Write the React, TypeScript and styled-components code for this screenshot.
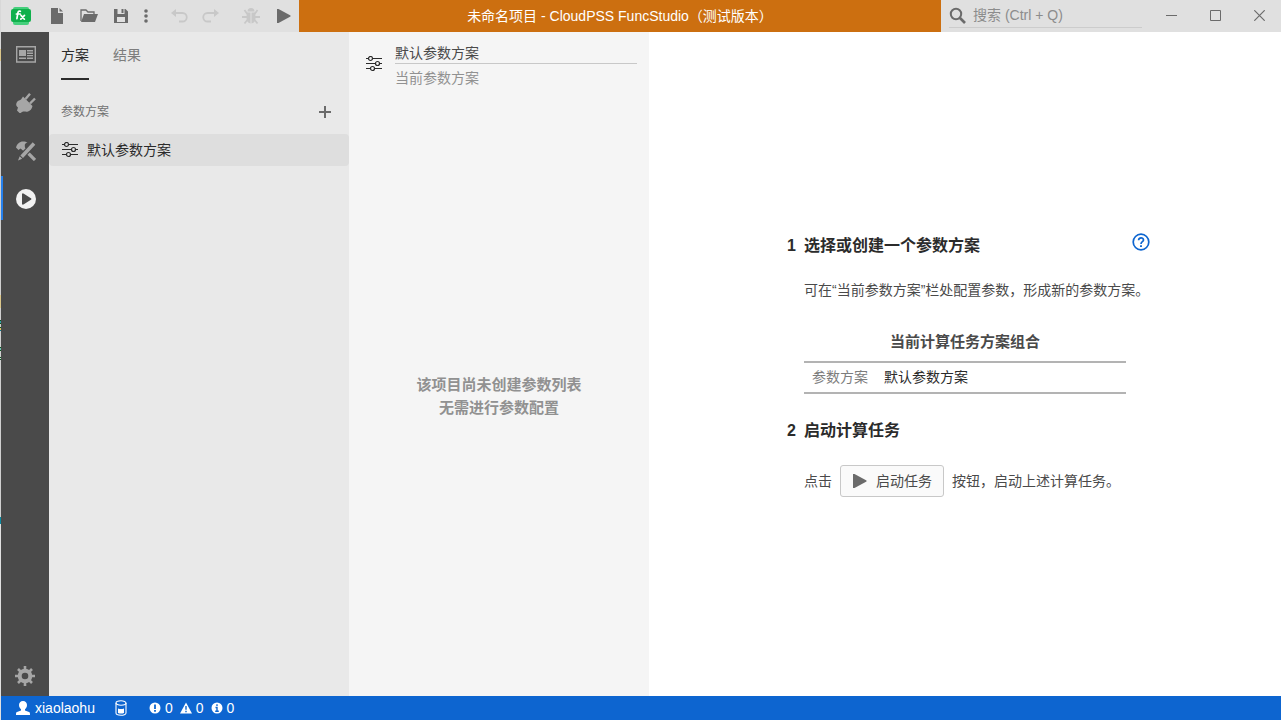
import React from 'react';
import styled, { createGlobalStyle } from 'styled-components';

const GlobalStyle = createGlobalStyle`
  *, *::before, *::after { box-sizing: border-box; }
  body {
    margin: 0;
    font-family: "Liberation Sans", "Noto Sans CJK SC", sans-serif;
    font-size: 14px;
    line-height: 20px;
    color: #2b2b2b;
    background: #fff;
  }
  h2, h3, p, ul { margin: 0; padding: 0; font-weight: normal; }
  button, input { font: inherit; color: inherit; border: 0; background: none; padding: 0; margin: 0; border-radius: 0; }
  svg { display: block; flex: none; }
`;

const Frame = styled.div`
  display: grid;
  grid-template-columns: 1px minmax(0, 1fr);
  min-height: 100vh;
`;

const DesktopEdge = styled.div`
  background: linear-gradient(
    #d8d8d8 49px, #dcc78a 49px 61px, #d0d0d0 61px 295px, #dcc78a 295px 308px,
    #d0d0d0 308px 320px, #0a5a20 320px 321px, #30a0b0 321px 323px, #0a5a20 323px 324px,
    #d0d0d0 324px 327px, #0a5a20 327px 328px, #dcc060 328px 330px, #0a7a90 330px 331px,
    #d0d0d0 331px 347px, #0a5a20 347px 348px, #70c0b0 348px 350px, #0a5a20 350px 351px,
    #d0d0d0 351px 357px, #0a5a20 357px 358px, #d0d0d0 358px 359px, #0a5a20 359px 360px,
    #d0d0d0 360px 517px, #0a8aa0 517px 524px, #e0e0e0 524px
  );
`;

const Window = styled.div`
  display: grid;
  grid-template-rows: 32px minmax(0, 1fr) 24px;
`;

const TitleBar = styled.header`
  display: flex;
  background: #e0e0e0;
  color: #6b6b6b;
`;

const Toolbar = styled.div`
  display: flex;
  align-items: center;
  padding-left: 8px;
`;

const Logo = styled.div`
  display: flex;
  margin-right: 8px;
`;

const ToolButton = styled.button<{ $narrow?: boolean; $gap?: boolean }>`
  display: flex;
  align-items: center;
  justify-content: center;
  width: ${p => (p.$narrow ? 18 : 32)}px;
  height: 32px;
  margin-left: ${p => (p.$gap ? 8 : 0)}px;
  &:disabled { color: #c8c8c8; }
`;

const Title = styled.div`
  flex: 1;
  background: #cc6f10;
  color: #fff;
  line-height: 32px;
  text-align: center;
  white-space: nowrap;
`;

const Search = styled.label`
  display: flex;
  align-items: center;
  gap: 7px;
  width: 193px;
  height: 28px;
  margin: 0 7px 0 8px;
  padding-top: 4px;
  border-bottom: 1px solid #cccccc;
`;

const SearchInput = styled.input`
  flex: 1;
  min-width: 0;
  padding-bottom: 2px;
  outline: 0;
  &::placeholder { color: #8c8c8c; opacity: 1; }
`;

const WindowButton = styled.button`
  display: flex;
  align-items: center;
  justify-content: center;
  width: 44px;
  height: 30px;
`;

const Workspace = styled.div`
  display: grid;
  grid-template-columns: 48px 300px 300px minmax(0, 1fr);
`;

const ActivityBar = styled.nav`
  display: flex;
  flex-direction: column;
  gap: 4px;
  background: #4a4a4a;
`;

const Activity = styled.button<{ $active?: boolean }>`
  display: flex;
  align-items: center;
  justify-content: center;
  height: 44px;
  border-left: 2px solid ${p => (p.$active ? '#2680eb' : 'transparent')};
  color: ${p => (p.$active ? '#f2f2f2' : '#a6a6a6')};
  padding-top: 2px;
`;

const Settings = styled(Activity)`
  height: 40px;
  margin-top: auto;
  padding: 0 2px 0 0;
`;

const SchemePanel = styled.aside`
  background: #e9e9e9;
`;

const Tabs = styled.div`
  display: flex;
  gap: 24px;
  height: 48px;
  padding-left: 12px;
`;

const Tab = styled.button<{ $active?: boolean }>`
  color: ${p => (p.$active ? '#2b2b2b' : '#7d7d7d')};
  border-bottom: 2px solid ${p => (p.$active ? '#2b2b2b' : 'transparent')};
`;

const SectionHead = styled.div`
  display: flex;
  align-items: center;
  justify-content: space-between;
  height: 54px;
  padding: 10px 8px 0 12px;
`;

const SectionTitle = styled.h3`
  font-size: 12px;
  color: #707070;
`;

const AddButton = styled.button`
  display: flex;
  align-items: center;
  justify-content: center;
  width: 32px;
  height: 32px;
  color: #6b6b6b;
`;

const SchemeItem = styled.button`
  display: flex;
  align-items: center;
  gap: 8px;
  width: 100%;
  height: 32px;
  padding: 0 12px;
  border-radius: 4px;
  background: #dedede;
`;

const ParamPanel = styled.section`
  display: flex;
  flex-direction: column;
  background: #f5f5f5;
`;

const ParamHead = styled.div`
  display: flex;
  align-items: center;
  gap: 12px;
  height: 64px;
  padding: 0 12px 0 16px;
`;

const ParamFields = styled.div`
  flex: 1;
  display: flex;
  flex-direction: column;
  gap: 4px;
  padding-top: 2px;
`;

const NameInput = styled.input`
  width: 100%;
  height: 22px;
  padding-bottom: 2px;
  color: #4a4a4a;
  border-bottom: 1px solid #c8c8c8;
  outline: 0;
`;

const NameLabel = styled.label`
  color: #919191;
`;

const Empty = styled.p`
  flex: 1;
  display: flex;
  flex-direction: column;
  justify-content: center;
  text-align: center;
  font-size: 15px;
  line-height: 23px;
  font-weight: bold;
  color: #919191;
`;

const Main = styled.main`
  display: flex;
  align-items: center;
  justify-content: center;
  background: #fff;
`;

const Guide = styled.div`
  width: 370px;
`;

const StepHead = styled.div`
  display: flex;
  justify-content: space-between;
`;

const StepTitle = styled.h2`
  display: flex;
  gap: 8px;
  font-size: 16px;
  line-height: 30px;
  font-weight: bold;
`;

const StepNumber = styled.span`
  width: 16px;
  text-align: right;
`;

const HelpButton = styled.button`
  display: flex;
  height: 20px;
  padding-top: 2px;
  color: #0d65d0;
`;

const StepBody = styled.div`
  margin: 19px 0 22px 24px;
  color: #4a4a4a;
  white-space: nowrap;
  &:last-child { margin-bottom: 0; }
`;

const Combo = styled.table`
  width: 322px;
  margin-top: 32px;
  border-collapse: separate;
  border-spacing: 0;
  text-align: left;
`;

const ComboCaption = styled.caption`
  padding-bottom: 9px;
  font-size: 15px;
  font-weight: bold;
`;

const ComboName = styled.th`
  width: 72px;
  height: 33px;
  padding: 0 0 2px 8px;
  font-weight: normal;
  color: #7d7d7d;
  border: solid #b3b3b3;
  border-width: 2px 0;
`;

const ComboValue = styled.td`
  padding: 0 8px 2px;
  color: #2b2b2b;
  border: solid #b3b3b3;
  border-width: 2px 0;
`;

const StartRow = styled.div`
  display: flex;
  align-items: center;
  gap: 8px;
`;

const StartButton = styled.button`
  display: flex;
  align-items: center;
  gap: 9px;
  height: 32px;
  padding: 0 11px;
  border: 1px solid #c8c8c8;
  border-radius: 3px;
  background: #fafafa;
  svg { color: #6b6b6b; }
`;

const StatusBar = styled.footer`
  display: flex;
  align-items: center;
  background: #0d65d0;
  color: #fff;
  padding-left: 14px;
`;

const StatusItem = styled.button<{ $space?: number }>`
  display: flex;
  align-items: center;
  gap: 4px;
  height: 24px;
  margin-right: ${p => p.$space ?? 7}px;
`;

const LogoIcon = () => (
  <svg width="24" height="20" viewBox="0 0 24 20">
    <rect x="4" y="1" width="16" height="18" rx="2" fill="#45cf7c" />
    <rect x="2" y="3" width="20" height="13" rx="2" fill="#10b04c" />
    <g stroke="#fff" fill="none" strokeWidth="1.7" strokeLinecap="round">
      <path d="M11.4 5.3c-1.700-.700-2.300.400-2.600 2L7.900 12.700M7.400 8h3.800M12 9.400l3.400 3.800M15.500 9.400l-3.700 3.800" />
    </g>
  </svg>
);
const FileIcon = () => (
  <svg width="18" height="18" viewBox="0 0 18 18" fill="currentColor"><path d="M3 1h7v5h5v11H3zM11.500 1L15 4.500h-3.500z" /></svg>
);
const FolderIcon = () => (
  <svg width="18" height="16" viewBox="0 0 18 16"><path d="M1 13V2h5l2 2h6v3" fill="none" stroke="currentColor" strokeWidth="1.300" /><path d="M4 6h14l-3 8H1z" fill="currentColor" /></svg>
);
const SaveIcon = () => (
  <svg width="16" height="16" viewBox="0 0 16 16"><path fill="currentColor" fillRule="evenodd" d="M1 1h11.500L15 3.500V15H1zM4.500 1v5h7V1zM4 9v5h8V9z" /><path fill="currentColor" d="M8.500 1h2v4h-2z" /></svg>
);
const MoreIcon = () => (
  <svg width="4" height="14" viewBox="0 0 4 14" fill="currentColor"><circle cx="2" cy="2" r="1.800" /><circle cx="2" cy="7" r="1.800" /><circle cx="2" cy="12" r="1.800" /></svg>
);
const UndoIcon = ({ flip }: { flip?: boolean }) => (
  <svg width="18" height="16" viewBox="0 0 18 16"><g transform={flip ? 'matrix(-1 0 0 1 18 0)' : undefined}><path d="M3 5h9.500a4 4 0 0 1 0 8.500H9" fill="none" stroke="currentColor" strokeWidth="1.800" /><path d="M6 1v8L1 5z" fill="currentColor" /></g></svg>
);
const BugIcon = () => (
  <svg width="18" height="18" viewBox="0 0 18 18"><path fill="currentColor" d="M5.500 4.500a3.500 3.500 0 0 1 7 0zM4.800 5.500h3.700v11C5.500 16 4.500 13.500 4.500 11zM9.500 5.500h3.700l.3 5.500c0 2.500-1 5-4 5.500z" /><path d="M2.500 3l2.800 4M15.500 3l-2.800 4M0 10h5M13 10h5M2.500 16.500l2.800-3.500M15.500 16.500l-2.800-3.500" fill="none" stroke="currentColor" strokeWidth="1.800" /></svg>
);
const PlayIcon = () => (
  <svg width="15" height="16" viewBox="0 0 15 16" fill="currentColor"><path d="M1 1h1.500L14.500 7.500v1L2.500 15H1z" /></svg>
);
const SearchIcon = () => (
  <svg width="17" height="17" viewBox="0 0 17 17" fill="none" stroke="currentColor"><circle cx="7" cy="7" r="5.200" strokeWidth="2" /><path d="M11 11l5 5" strokeWidth="2.600" /></svg>
);
const MinimizeIcon = () => (
  <svg width="11" height="11" viewBox="0 0 11 11" stroke="currentColor"><path d="M0 5.500h11" /></svg>
);
const MaximizeIcon = () => (
  <svg width="11" height="11" viewBox="0 0 11 11" stroke="currentColor" fill="none"><path d="M.5.5h10v10H.5z" /></svg>
);
const CloseIcon = () => (
  <svg width="11" height="11" viewBox="0 0 11 11" stroke="currentColor"><path d="M.3.3l10.400 10.400M10.700.3L.3 10.700" strokeWidth="1.200" /></svg>
);
const NewsIcon = () => (
  <svg width="20" height="18" viewBox="0 0 20 18"><path d="M.7.7h18.600v15.300H.7z" fill="none" stroke="currentColor" strokeWidth="1.400" /><path fill="currentColor" d="M3 4h7v6H3zM11 4h6v1.500h-6zM11 6.500h6V8h-6zM11 9h6v1.300h-6zM3 11.500h7V13H3zM11 11.500h6V13h-6z" /></svg>
);
const PlugIcon = () => (
  <svg width="20" height="20" viewBox="0 0 20 20"><path fill="currentColor" d="M7 3.500l9.500 9.500c-.500 3-2.500 5-4.500 5.500-2 .500-4-.300-6 .500L4 20.500 1 17.500l1-3C-.5 13 0 10.500 1 9c1-1.500 3-1.500 4-2.500z" /><path d="M9.500 6L14 .8M14 10.500l5-5" stroke="currentColor" strokeWidth="2.400" /></svg>
);
const ToolsIcon = () => (
  <svg width="20" height="20" viewBox="0 0 20 20">
    <path d="M7 7l12 12" stroke="currentColor" strokeWidth="3.200" />
    <path d="M0 6.500C1 3 3.500.5 7 .5c2 0 3.500.500 4.500 1C9.500 2 8.500 3 8.800 5L9 7 7 9.500 4.500 7.500 2.500 9z" fill="currentColor" />
    <path d="M18.500 2.500L3.500 17.500" stroke="#4a4a4a" strokeWidth="6" />
    <path d="M16.700 1.200l2.600 2.600L7 17l-2.600-2.600zM3.700 15.200L6.200 17.700 2 19.500z" fill="currentColor" />
  </svg>
);
const RunIcon = () => (
  <svg width="20" height="20" viewBox="0 0 20 20"><circle cx="10" cy="10" r="10" fill="currentColor" /><path d="M6 4.500h1.500L15.300 9.500v1L7.500 15.500H6z" fill="#4a4a4a" /></svg>
);
const GearIcon = () => (
  <svg width="20" height="20" viewBox="0 0 20 20" fill="none" stroke="currentColor"><circle cx="10" cy="10" r="5.300" strokeWidth="4" /><path d="M10 0v4M10 16v4M0 10h4M16 10h4M3 3l3 3M14 14l3 3M17 3l-3 3M3 17l3-3" strokeWidth="2.600" /></svg>
);
const SlidersIcon = () => (
  <svg width="18" height="16" viewBox="0 0 18 16" fill="none" stroke="#2b2b2b" strokeWidth="1.200"><path d="M1 2.500h2.500M7.500 2.500H17M1 7.500h9.500M14.500 7.500H17M1 12.500h4.500M9.500 12.500H17" /><circle cx="5.500" cy="2.500" r="2" /><circle cx="12.500" cy="7.500" r="2" /><circle cx="7.500" cy="12.500" r="2" /></svg>
);
const PlusIcon = () => (
  <svg width="12" height="12" viewBox="0 0 12 12" stroke="currentColor" strokeWidth="2"><path d="M6 0v12M0 6h12" /></svg>
);
const HelpIcon = () => (
  <svg width="18" height="18" viewBox="0 0 18 18" fill="none" stroke="currentColor"><circle cx="9" cy="9" r="7.800" strokeWidth="1.700" /><path d="M6.600 7.200C6.600 4 11.500 4.200 11.500 7c0 1.700-2.500 1.800-2.500 4" strokeWidth="1.700" /><path d="M9 12.200v1.800" strokeWidth="1.900" /></svg>
);
const UserIcon = () => (
  <svg width="16" height="16" viewBox="0 0 16 16" fill="currentColor"><path d="M8 1c2.500 0 4 1.700 4 4 0 2-1 3.500-2 4.300v1.200l4 1.500c.8.400 1 1 1 2.500v.5H1v-.5c0-1.500.2-2.100 1-2.500l4-1.500V9.300C5 8.500 4 7 4 5c0-2.300 1.500-4 4-4z" /></svg>
);
const DatabaseIcon = () => (
  <svg width="12" height="16" viewBox="0 0 12 16"><path d="M1 3v10c0 3 10 3 10 0V3" fill="none" stroke="currentColor" strokeWidth="1.100" /><ellipse cx="6" cy="3" rx="5" ry="2.200" fill="none" stroke="currentColor" strokeWidth="1.100" /><path d="M3 8.500c2 .8 4 .8 6 0V13c-2 .8-4 .8-6 0z" fill="currentColor" /></svg>
);
const ErrorIcon = () => (
  <svg width="12" height="12" viewBox="0 0 12 12"><circle cx="6" cy="6" r="5.500" fill="currentColor" /><path d="M6 2.500v4.500M6 8v1.700" stroke="#0d65d0" strokeWidth="1.800" /></svg>
);
const WarningIcon = () => (
  <svg width="12" height="12" viewBox="0 0 12 12"><path d="M6 .5l6 11H0z" fill="currentColor" /><path d="M6 4v3.800M6 8.700v1.500" stroke="#0d65d0" strokeWidth="1.400" /></svg>
);
const InfoIcon = () => (
  <svg width="12" height="12" viewBox="0 0 12 12"><circle cx="6" cy="6" r="5.500" fill="currentColor" /><path d="M6 2.300v1.700M4.500 5.500H6v4M4.200 9.200h3.600" fill="none" stroke="#0d65d0" strokeWidth="1.400" /></svg>
);

export default function App() {
  return (
    <>
      <GlobalStyle />
      <Frame>
        <DesktopEdge />
        <Window>
          <TitleBar>
            <Toolbar>
              <Logo><LogoIcon /></Logo>
              <ToolButton aria-label="新建"><FileIcon /></ToolButton>
              <ToolButton aria-label="打开"><FolderIcon /></ToolButton>
              <ToolButton aria-label="保存"><SaveIcon /></ToolButton>
              <ToolButton aria-label="更多" $narrow><MoreIcon /></ToolButton>
              <ToolButton aria-label="撤销" $gap disabled><UndoIcon /></ToolButton>
              <ToolButton aria-label="重做" disabled><UndoIcon flip /></ToolButton>
              <ToolButton aria-label="调试" $gap disabled><BugIcon /></ToolButton>
              <ToolButton aria-label="运行"><PlayIcon /></ToolButton>
            </Toolbar>
            <Title>未命名项目 - CloudPSS FuncStudio（测试版本）</Title>
            <Search>
              <SearchIcon />
              <SearchInput type="text" placeholder="搜索 (Ctrl + Q)" />
            </Search>
            <WindowButton aria-label="最小化"><MinimizeIcon /></WindowButton>
            <WindowButton aria-label="最大化"><MaximizeIcon /></WindowButton>
            <WindowButton aria-label="关闭"><CloseIcon /></WindowButton>
          </TitleBar>

          <Workspace>
            <ActivityBar>
              <Activity aria-label="总览"><NewsIcon /></Activity>
              <Activity aria-label="接口"><PlugIcon /></Activity>
              <Activity aria-label="实现"><ToolsIcon /></Activity>
              <Activity aria-label="运行" $active><RunIcon /></Activity>
              <Settings aria-label="设置"><GearIcon /></Settings>
            </ActivityBar>

            <SchemePanel>
              <Tabs>
                <Tab $active>方案</Tab>
                <Tab>结果</Tab>
              </Tabs>
              <SectionHead>
                <SectionTitle>参数方案</SectionTitle>
                <AddButton aria-label="添加"><PlusIcon /></AddButton>
              </SectionHead>
              <SchemeItem><SlidersIcon />默认参数方案</SchemeItem>
            </SchemePanel>

            <ParamPanel>
              <ParamHead>
                <SlidersIcon />
                <ParamFields>
                  <NameInput id="scheme-name" type="text" defaultValue="默认参数方案" />
                  <NameLabel htmlFor="scheme-name">当前参数方案</NameLabel>
                </ParamFields>
              </ParamHead>
              <Empty>
                <span>该项目尚未创建参数列表</span>
                <span>无需进行参数配置</span>
              </Empty>
            </ParamPanel>

            <Main>
              <Guide>
                <StepHead>
                  <StepTitle><StepNumber>1</StepNumber>选择或创建一个参数方案</StepTitle>
                  <HelpButton aria-label="帮助"><HelpIcon /></HelpButton>
                </StepHead>
                <StepBody>
                  <p>可在“当前参数方案”栏处配置参数，形成新的参数方案。</p>
                  <Combo>
                    <ComboCaption>当前计算任务方案组合</ComboCaption>
                    <tbody>
                      <tr>
                        <ComboName scope="row">参数方案</ComboName>
                        <ComboValue>默认参数方案</ComboValue>
                      </tr>
                    </tbody>
                  </Combo>
                </StepBody>
                <StepTitle><StepNumber>2</StepNumber>启动计算任务</StepTitle>
                <StepBody>
                  <StartRow>
                    点击
                    <StartButton><PlayIcon />启动任务</StartButton>
                    按钮，启动上述计算任务。
                  </StartRow>
                </StepBody>
              </Guide>
            </Main>
          </Workspace>

          <StatusBar>
            <StatusItem $space={20}><UserIcon />xiaolaohu</StatusItem>
            <StatusItem $space={22}><DatabaseIcon /></StatusItem>
            <StatusItem><ErrorIcon />0</StatusItem>
            <StatusItem><WarningIcon />0</StatusItem>
            <StatusItem><InfoIcon />0</StatusItem>
          </StatusBar>
        </Window>
      </Frame>
    </>
  );
}
